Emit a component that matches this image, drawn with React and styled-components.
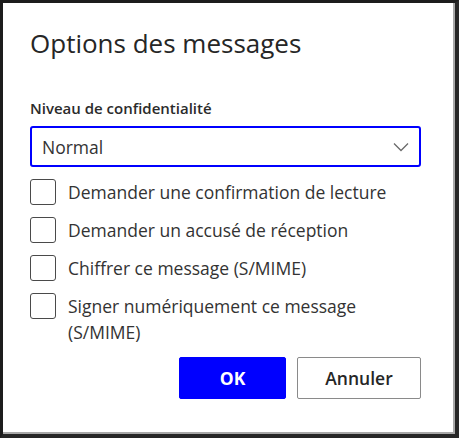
import React, { useState } from 'react';
import styled, { createGlobalStyle } from 'styled-components';

const GlobalStyle = createGlobalStyle`
  html, body {
    margin: 0;
    padding: 0;
    background: #ffffff;
  }
  body {
    font-family: 'Open Sans', 'Noto Sans', 'Liberation Sans', sans-serif;
  }
`;

const Dialog = styled.section`
  box-sizing: border-box;
  width: 459px;
  height: 438px;
  background: #ffffff;
  border-top: 3px solid #1c1c1c;
  border-left: 3px solid #1c1c1c;
  border-right: 4px solid #262626;
  border-bottom: 4px solid #262626;
  box-shadow: inset -2px -2px 0 #a8a8a8;
  padding: 23px 34px 0 27px;
  display: flex;
  flex-direction: column;
`;

const Title = styled.h1`
  margin: 0;
  font-size: 26px;
  line-height: 34px;
  font-weight: 400;
  color: #262626;
`;

const Label = styled.label`
  display: block;
  margin: 37px 0 7px;
  font-size: 15px;
  line-height: 22px;
  font-weight: 600;
  color: #2b2b2b;
`;

const Select = styled.button`
  box-sizing: border-box;
  width: 100%;
  height: 41px;
  display: flex;
  align-items: center;
  justify-content: space-between;
  padding: 0 10px 0 10px;
  background: #ffffff;
  border: 2px solid #0000ff;
  border-radius: 3px;
  font-family: inherit;
  font-size: 17.5px;
  color: #333333;
  cursor: pointer;
`;

const Checks = styled.div`
  display: flex;
  flex-direction: column;
  gap: 12px;
  margin-top: 12px;
`;

const CheckRow = styled.label`
  display: flex;
  align-items: flex-start;
  gap: 12px;
  cursor: pointer;
`;

const Box = styled.span`
  box-sizing: border-box;
  flex: 0 0 26px;
  width: 26px;
  height: 26px;
  border: 1px solid #4a4a4a;
  border-radius: 3px;
  background: ${(props) => (props.checked ? '#0000ff' : '#ffffff')};
`;

const CheckText = styled.span`
  font-size: 17.5px;
  line-height: 26px;
  color: #333333;
`;

const Actions = styled.div`
  display: flex;
  justify-content: flex-end;
  gap: 11px;
  margin-top: 12px;
`;

const Button = styled.button`
  box-sizing: border-box;
  height: 42px;
  width: ${(props) => props.width}px;
  border-radius: 2px;
  font-family: inherit;
  font-size: 17.5px;
  font-weight: ${(props) => (props.primary ? 700 : 600)};
  cursor: pointer;
  border: 1px solid ${(props) => (props.primary ? '#0000ff' : '#8a8a8a')};
  background: ${(props) => (props.primary ? '#0000ff' : '#ffffff')};
  color: ${(props) => (props.primary ? '#ffffff' : '#262626')};
`;

const options = [
  'Demander une confirmation de lecture',
  'Demander un accusé de réception',
  'Chiffrer ce message (S/MIME)',
  'Signer numériquement ce message (S/MIME)',
];

const Chevron = () => (
  <svg width="16" height="10" viewBox="0 0 16 10" fill="none">
    <path d="M1 1.5 8 8.5 15 1.5" stroke="#6b6b6b" strokeWidth="1.3" />
  </svg>
);

const App = () => {
  const [checked, setChecked] = useState([false, false, false, false]);

  const toggle = (i) => {
    setChecked((prev) => prev.map((v, j) => (j === i ? !v : v)));
  };

  return (
    <>
      <GlobalStyle />
      <Dialog>
        <Title>Options des messages</Title>
        <Label>Niveau de confidentialité</Label>
        <Select type="button">
          <span>Normal</span>
          <Chevron />
        </Select>
        <Checks>
          {options.map((text, i) => (
            <CheckRow key={text} onClick={() => toggle(i)}>
              <Box checked={checked[i]} />
              <CheckText>{text}</CheckText>
            </CheckRow>
          ))}
        </Checks>
        <Actions>
          <Button primary width={107}>OK</Button>
          <Button width={124}>Annuler</Button>
        </Actions>
      </Dialog>
    </>
  );
};

export default App;
